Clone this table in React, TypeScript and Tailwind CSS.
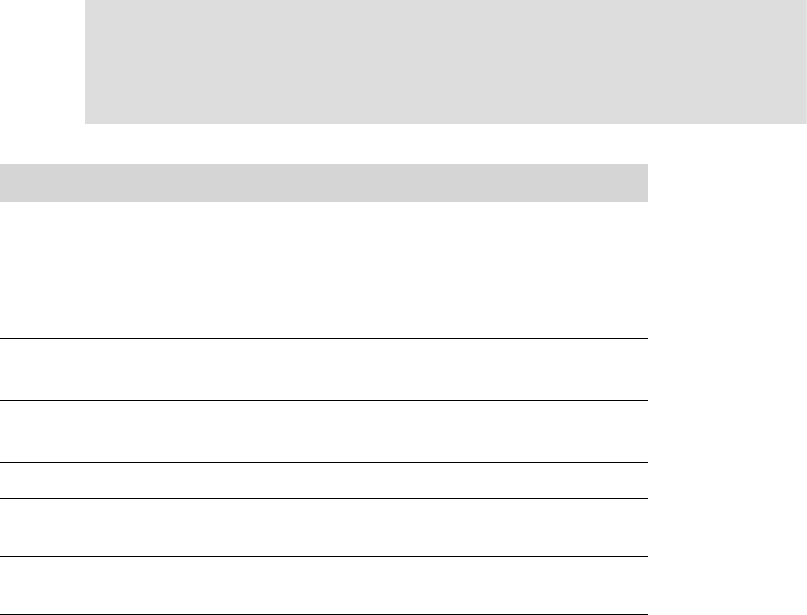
const rows = [136, 61, 61, 35, 57, 57]

export default function App() {
  return (
    <div className="w-[807px] h-[615px] overflow-hidden bg-white font-['Liberation_Sans',sans-serif]">
      {/* banner */}
      <div className="ml-[85px] w-[722px] h-[124px] bg-[#dcdddc] border-r border-[#e4e5e4]" />

      {/* table */}
      <div className="mt-[40px] w-[648px]">
        <div className="h-[38px] bg-[#d4d5d4]" />
        {rows.map((h, i) => (
          <div key={i} className="border-b border-black" style={{ height: h + 1 }} />
        ))}
      </div>
    </div>
  )
}
